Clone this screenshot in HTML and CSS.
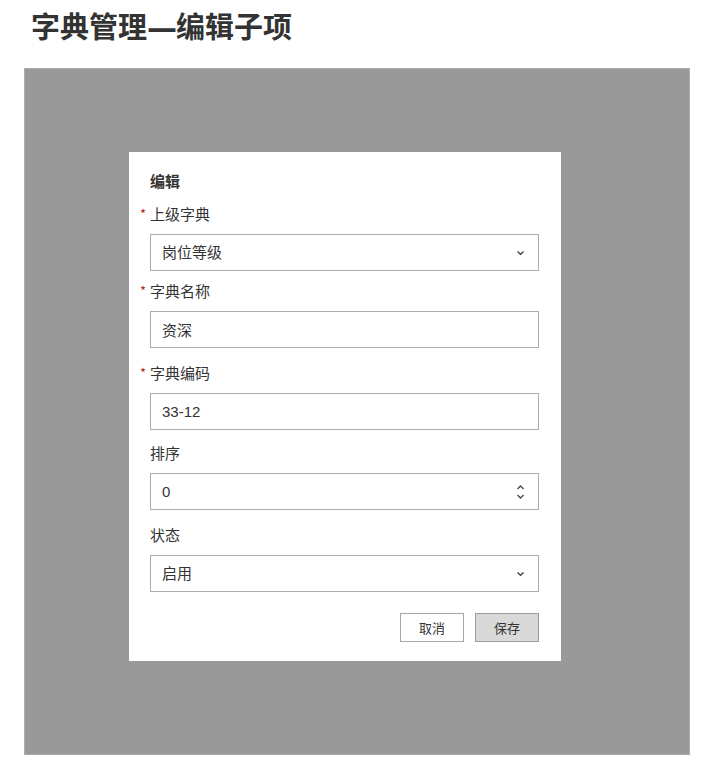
FILE: index.html
```html
<!DOCTYPE html>
<html lang="zh-CN">
<head>
    <meta charset="UTF-8">
    <meta name="viewport" content="width=device-width, initial-scale=1.0">
    <title>字典管理—编辑子项</title>
    <link rel="stylesheet" href="styles.css">
</head>
<body>
    <div class="page">
        <h1>字典管理<span class="dash">—</span>编辑子项</h1>
        <div class="overlay">
            <div class="dialog">
                <div class="dialog-title">编辑</div>

                <div class="field">
                    <label><span class="req">*</span>上级字典</label>
                    <div class="box">
                        <select>
                            <option>岗位等级</option>
                        </select>
                        <svg class="icon" width="9" height="6" viewBox="0 0 9 6"><path d="M1.5 1.5 L4.5 4.3 L7.5 1.5" fill="none" stroke="#444" stroke-width="1.4"/></svg>
                    </div>
                </div>

                <div class="field gap-sm">
                    <label><span class="req">*</span>字典名称</label>
                    <div class="box">
                        <input type="text" value="资深">
                    </div>
                </div>

                <div class="field gap-lg">
                    <label><span class="req">*</span>字典编码</label>
                    <div class="box">
                        <input type="text" value="33-12">
                    </div>
                </div>

                <div class="field gap-md">
                    <label>排序</label>
                    <div class="box">
                        <input type="text" value="0">
                        <svg class="icon" width="9" height="16" viewBox="0 0 9 16"><path d="M1.5 5 L4.5 2 L7.5 5 M1.5 11 L4.5 14 L7.5 11" fill="none" stroke="#444" stroke-width="1.3"/></svg>
                    </div>
                </div>

                <div class="field gap-lg">
                    <label>状态</label>
                    <div class="box">
                        <select>
                            <option>启用</option>
                        </select>
                        <svg class="icon" width="9" height="6" viewBox="0 0 9 6"><path d="M1.5 1.5 L4.5 4.3 L7.5 1.5" fill="none" stroke="#444" stroke-width="1.4"/></svg>
                    </div>
                </div>

                <div class="actions">
                    <button class="btn">取消</button>
                    <button class="btn btn-save">保存</button>
                </div>
            </div>
        </div>
    </div>
</body>
</html>
```

FILE: styles.css
```css
body {
    margin: 0;
    background-color: #fff;
    color: #333;
    font-family: "Noto Sans CJK SC", "Liberation Sans", sans-serif;
}
.page {
    padding: 0 33px 0 24px;
}
h1 {
    height: 50px;
    margin: 0 0 18px 0;
    padding-left: 7px;
    font-size: 29px;
    line-height: 50px;
    font-weight: bold;
    color: #333;
}
h1 .dash {
    font-family: "DejaVu Sans", sans-serif;
    font-size: 30px;
    line-height: 1;
    letter-spacing: -1px;
}
.overlay {
    box-sizing: border-box;
    width: 666px;
    height: 687px;
    padding: 83px 0 0 104px;
    background-color: #999;
    border: 1px solid #aeaeae;
}
.dialog {
    box-sizing: border-box;
    width: 432px;
    padding: 19px 22px 19px 21px;
    background-color: #fff;
}
.dialog-title {
    font-size: 15px;
    font-weight: bold;
    line-height: 20px;
    margin-bottom: 13px;
}
.field label {
    display: block;
    font-size: 15px;
    line-height: 20px;
    margin-bottom: 10px;
}
.req {
    display: inline-block;
    width: 10px;
    margin-left: -10px;
    color: #b22a2a;
    font-size: 13px;
    vertical-align: top;
    line-height: 19px;
}
.gap-sm {
    margin-top: 10px;
}
.gap-md {
    margin-top: 13px;
}
.gap-lg {
    margin-top: 15px;
}
.box {
    box-sizing: border-box;
    display: flex;
    align-items: center;
    height: 37px;
    padding: 0 13px 0 11px;
    border: 1px solid #acacac;
    background-color: #fff;
}
.box input, .box select {
    flex: 1;
    min-width: 0;
    height: 100%;
    padding: 0;
    border: none;
    outline: none;
    background: transparent;
    color: #333;
    font-size: 15px;
    font-family: "Liberation Sans", "Noto Sans CJK SC", sans-serif;
    appearance: none;
    -webkit-appearance: none;
}
.icon {
    flex: none;
}
.actions {
    display: flex;
    justify-content: flex-end;
    gap: 11px;
    margin-top: 21px;
}
.btn {
    box-sizing: border-box;
    width: 64px;
    height: 29px;
    padding: 0;
    border: 1px solid #a8a8a8;
    background-color: #fff;
    color: #333;
    font-size: 13px;
    font-family: "Noto Sans CJK SC", sans-serif;
    cursor: pointer;
}
.btn-save {
    background-color: #d9d9d9;
    border-color: #9c9c9c;
}
```
